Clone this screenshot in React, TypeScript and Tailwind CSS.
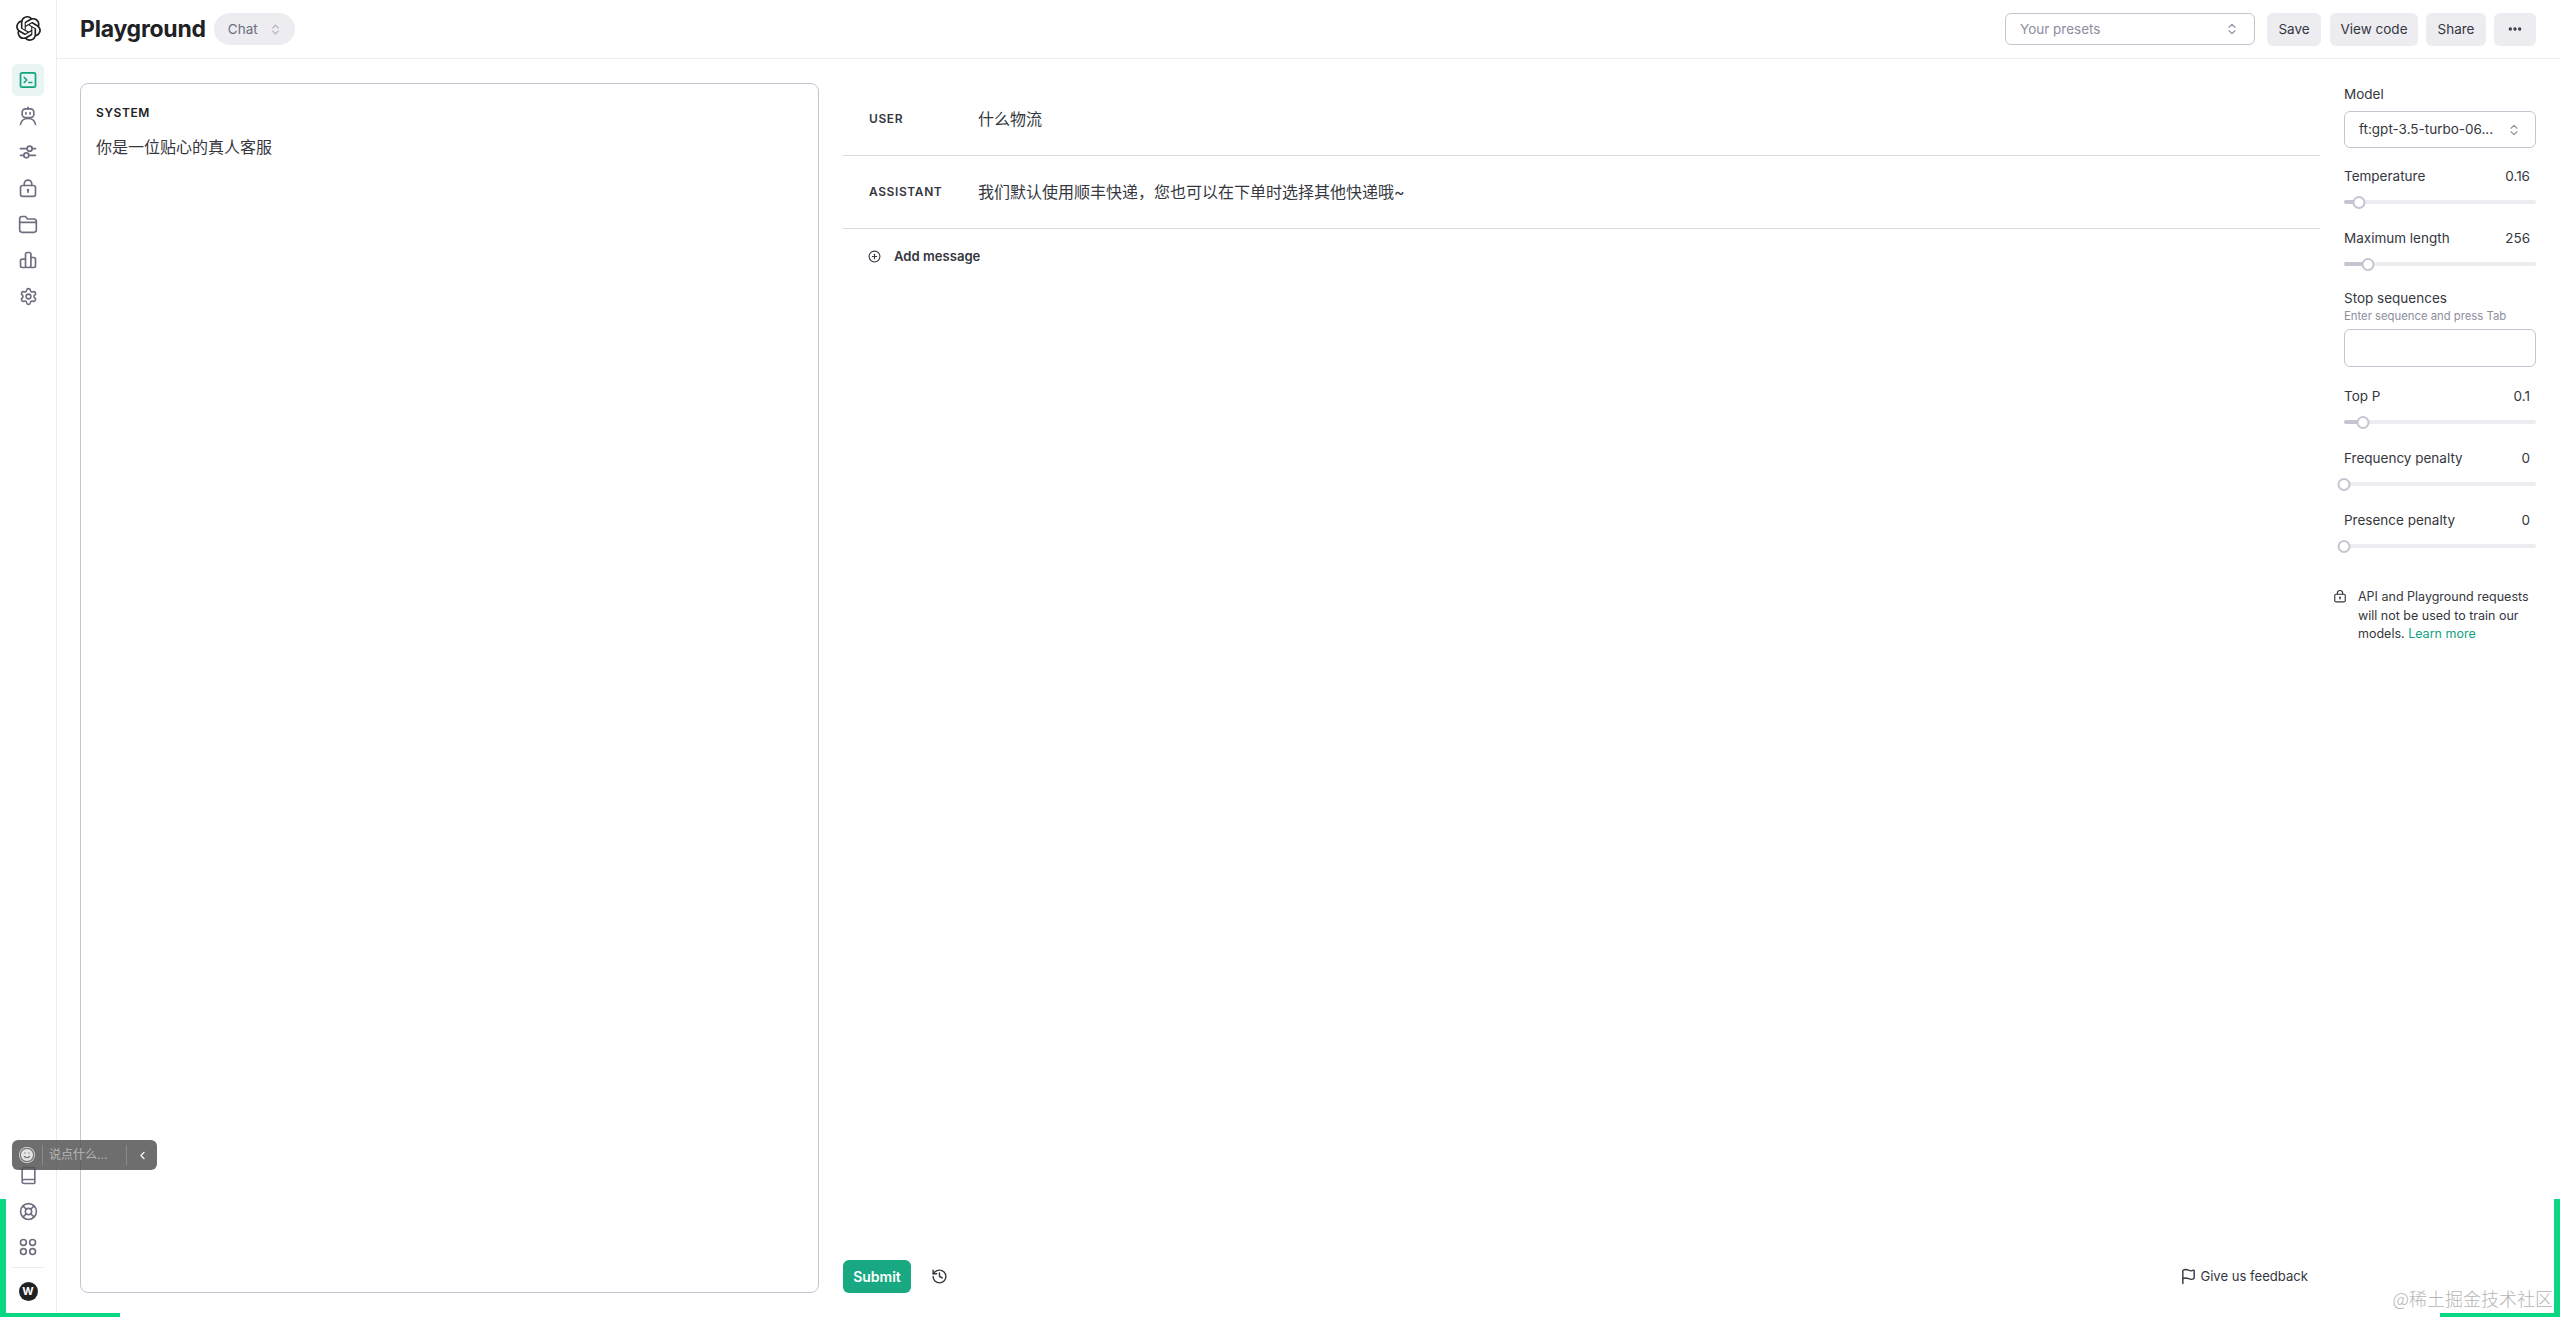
import React from 'react';
import { Book, ChevronLeft, ChevronsUpDown, CirclePlus, Ellipsis, Flag, History, LifeBuoy, Settings as SettingsGear, Smile } from 'lucide-react';
import { SiOpenai } from 'react-icons/si';

const FONT = "font-['Inter','Noto_Sans_CJK_SC',sans-serif]";

const iconProps = {
  width: 18,
  height: 18,
  viewBox: '0 0 24 24',
  fill: 'none',
  stroke: 'currentColor',
  strokeWidth: 2,
  strokeLinecap: 'round' as const,
  strokeLinejoin: 'round' as const,
};

const TerminalIcon = () => (
  <svg {...iconProps} width={20} height={20}>
    <rect x="3" y="3.5" width="18" height="17" rx="2" />
    <path d="M7.5 9l3 3-3 3M13 15h3.5" />
  </svg>
);
const BotIcon = () => (
  <svg {...iconProps} width={20} height={20}>
    <path d="M12 1.500v2" />
    <rect x="5" y="3.500" width="14" height="10.500" rx="4" />
    <path d="M9.500 8v1.500M14.500 8v1.500M3 22c.8-4.500 4-7 9-7s8.200 2.500 9 7" />
  </svg>
);
const TuneIcon = () => (
  <svg {...iconProps} width={20} height={20}>
    <circle cx="14" cy="8" r="3" />
    <circle cx="10" cy="16" r="3" />
    <path d="M3 8h8M17 8h4M3 16h4M13 16h8" />
  </svg>
);
const LockIcon = ({ size = 20 }: { size?: number }) => (
  <svg {...iconProps} width={size} height={size}>
    <rect x="3" y="9" width="18" height="13" rx="2.500" />
    <path d="M7.500 9V7a4.500 4.500 0 0 1 9 0v2M12 14.500v2.500" />
    <circle cx="12" cy="14.500" r="0.600" />
  </svg>
);
const FolderIcon = () => (
  <svg {...iconProps} width={20} height={20}>
    <path d="M2 6a3 3 0 0 1 3-3h4l2.500 3H19a3 3 0 0 1 3 3v10a3 3 0 0 1-3 3H5a3 3 0 0 1-3-3z" />
    <path d="M2 10h20" />
  </svg>
);
const BarsIcon = () => (
  <svg {...iconProps} width={20} height={20}>
    <path d="M9 21H5a2 2 0 0 1-2-2v-6a2 2 0 0 1 2-2h4" />
    <rect x="9" y="3" width="6.500" height="18" rx="2" />
    <path d="M15.500 9H19a2 2 0 0 1 2 2v8a2 2 0 0 1-2 2h-3.500" />
  </svg>
);
const AppsIcon = () => (
  <svg {...iconProps} width={20} height={20}>
    <circle cx="6.500" cy="6.500" r="3.500" />
    <circle cx="17.500" cy="6.500" r="3.500" />
    <circle cx="6.500" cy="17.500" r="3.500" />
    <circle cx="17.500" cy="17.500" r="3.500" />
  </svg>
);

const NavItem = ({ children, active }: { children: React.ReactNode; active?: boolean }) => (
  <div
    className={
      active
        ? 'flex h-8 w-8 items-center justify-center rounded-md bg-[#e9f5f3] text-[#10a37f]'
        : 'flex h-8 w-8 items-center justify-center rounded-md text-[#6e6e80]'
    }
  >
    {children}
  </div>
);

const Sidebar = () => (
  <aside className="flex h-full w-[57px] shrink-0 flex-col items-center border-r border-[#ececf1]">
    <div className="flex h-[56px] shrink-0 items-center justify-center text-[#202123]">
      <SiOpenai size={25} />
    </div>
    <nav className="mt-[8px] flex flex-col gap-1">
      <NavItem active><TerminalIcon /></NavItem>
      <NavItem><BotIcon /></NavItem>
      <NavItem><TuneIcon /></NavItem>
      <NavItem><LockIcon /></NavItem>
      <NavItem><FolderIcon /></NavItem>
      <NavItem><BarsIcon /></NavItem>
      <NavItem><SettingsGear size={19} strokeWidth={2} /></NavItem>
    </nav>
    <div className="mt-auto flex flex-col items-center gap-1 pb-[10px]">
      <NavItem><Book size={19} strokeWidth={2} /></NavItem>
      <NavItem><LifeBuoy size={19} strokeWidth={2} /></NavItem>
      <NavItem><AppsIcon /></NavItem>
      <div className="h-px w-8 bg-[#ececf1]" />
      <div className="mt-[3px] flex h-8 w-8 items-center justify-center">
        <div className="flex h-[19px] w-[19px] items-center justify-center rounded-full bg-[#202123] text-[11px] font-bold text-white">
          W
        </div>
      </div>
    </div>
  </aside>
);

const HeaderButton = ({ children, className }: { children: React.ReactNode; className: string }) => (
  <button className={`flex h-[33px] items-center justify-center rounded-md bg-[#ececf1] text-[13.500px] text-[#353740] ${className}`}>
    {children}
  </button>
);

const Header = () => (
  <header className="flex h-[59px] shrink-0 items-center justify-between border-b border-[#ececf1] pl-[23px] pr-[24px]">
    <div className="flex items-center gap-[8px]">
      <h1 className="text-[23px] font-bold tracking-[-0.01em] text-[#202123]">Playground</h1>
      <div className="flex h-8 w-[81px] items-center rounded-full bg-[#ececf1] pl-[14px] text-[13.500px] text-[#6e6e80]">
        Chat
        <ChevronsUpDown size={13} className="ml-[11px] text-[#acacbe]" />
      </div>
    </div>
    <div className="flex items-center">
      <div className="flex h-8 w-[250px] items-center justify-between rounded-md border border-[#c5c5d2] pl-[14px] pr-[15px] text-[13.500px] text-[#8e8ea0]">
        Your presets
        <ChevronsUpDown size={14} className="text-[#8e8ea0]" />
      </div>
      <HeaderButton className="ml-[12px] w-[54px]">Save</HeaderButton>
      <HeaderButton className="ml-[9px] w-[88px]">View code</HeaderButton>
      <HeaderButton className="ml-[8px] w-[60px]">Share</HeaderButton>
      <HeaderButton className="ml-[8px] w-[42px]"><Ellipsis size={16} strokeWidth={3} /></HeaderButton>
    </div>
  </header>
);

const MessageRow = ({ role, text }: { role: string; text: string }) => (
  <div className="flex h-[73px] shrink-0 items-center border-b border-[#d9d9e3] pl-[26px]">
    <div className="w-[109px] text-[12px] font-semibold tracking-[0.05em] text-[#353740]">{role}</div>
    <div className="text-[16px] text-[#353740]">{text}</div>
  </div>
);

const Slider = ({ percent }: { percent: number }) => (
  <div className="relative mt-[10px] flex h-3 items-center">
    <div className="h-[4px] w-full rounded-full bg-[#ececf1]">
      <div className="h-full rounded-full bg-[#c5c5d2]" style={{ width: `${percent}%` }} />
    </div>
    <div
      className="absolute h-[13px] w-[13px] -translate-x-1/2 rounded-full border-2 border-[#c5c5d2] bg-white"
      style={{ left: `${percent}%` }}
    />
  </div>
);

const Param = ({ label, value, percent, className }: { label: string; value: string; percent: number; className: string }) => (
  <div className={className}>
    <div className="flex h-5 items-center justify-between pr-[6px] text-[13.500px] text-[#353740]">
      <span>{label}</span>
      <span>{value}</span>
    </div>
    <Slider percent={percent} />
  </div>
);

const Settings = () => (
  <section className="flex w-[192px] shrink-0 flex-col pt-[25px]">
    <div className="flex h-5 items-center text-[13.500px] text-[#353740]">Model</div>
    <div className="mt-[7px] flex h-[37px] items-center justify-between rounded-md border border-[#c5c5d2] pl-[14px] pr-[14px] text-[13.500px] text-[#353740]">
      ft:gpt-3.5-turbo-06...
      <ChevronsUpDown size={14} className="text-[#8e8ea0]" />
    </div>
    <Param className="mt-[18px]" label="Temperature" value="0.16" percent={8} />
    <Param className="mt-[20px]" label="Maximum length" value="256" percent={12.5} />
    <div className="mt-[18px] flex h-5 items-center text-[13.500px] text-[#353740]">Stop sequences</div>
    <div className="flex h-4 items-center text-[11.300px] text-[#8e8ea0]">Enter sequence and press Tab</div>
    <div className="mt-[5px] h-[38px] rounded-md border border-[#c5c5d2]" />
    <Param className="mt-[19px]" label="Top P" value="0.1" percent={10} />
    <Param className="mt-[20px]" label="Frequency penalty" value="0" percent={0} />
    <Param className="mt-[20px]" label="Presence penalty" value="0" percent={0} />
    <div className="mt-[36px] -ml-[11px] flex gap-[11px] text-[12.500px] leading-[18.500px] text-[#353740]">
      <div className="mt-px"><LockIcon size={14} /></div>
      <div className="w-[178px]">
        <div>API and Playground requests</div>
        <div>will not be used to train our</div>
        <div>
          <span>models. </span>
          <span className="text-[#10a37f]">Learn more</span>
        </div>
      </div>
    </div>
  </section>
);

export default function App() {
  return (
    <div className={`relative flex h-screen w-full overflow-hidden bg-white ${FONT}`}>
      <Sidebar />
      <main className="flex h-full min-w-0 flex-1 flex-col">
        <Header />
        <div className="flex min-h-0 flex-1 pb-[24px] pl-[23px] pr-[24px]">
          <section className="mt-[24px] w-[739px] shrink-0 rounded-lg border border-[#c5c5d2] pl-[15px] pt-[20px]">
            <div className="text-[12px] font-semibold tracking-[0.05em] text-[#202123]">SYSTEM</div>
            <div className="mt-[13px] text-[16px] text-[#353740]">你是一位贴心的真人客服</div>
          </section>
          <section className="ml-[24px] mr-[24px] mt-[24px] flex min-w-0 flex-1 flex-col">
            <MessageRow role="USER" text="什么物流" />
            <MessageRow role="ASSISTANT" text="我们默认使用顺丰快递，您也可以在下单时选择其他快递哦~" />
            <div className="flex h-[55px] items-center gap-[13px] pl-[25px] text-[13.100px] font-semibold text-[#353740]">
              <CirclePlus size={13} className="-mt-px" />
              Add message
            </div>
            <div className="mt-auto flex items-center justify-between pr-[12px]">
              <div className="flex items-center gap-[20px]">
                <button className="flex h-[33px] w-[68px] items-center justify-center rounded-md bg-[#19a982] text-[14px] font-semibold text-white">
                  Submit
                </button>
                <History size={17} className="text-[#353740]" />
              </div>
              <div className="flex items-center gap-[3px] text-[13.100px] text-[#353740]">
                <Flag size={17} />
                Give us feedback
              </div>
            </div>
          </section>
          <Settings />
        </div>
      </main>

      {/* browser extension widget and capture frame, sit on top of the page */}
      <div className="absolute left-[12px] top-[1140px] flex h-[30px] w-[145px] items-center rounded-md bg-[#555555]/85 pl-[7px]">
        <Smile size={16} className="rounded-full bg-[#e5e5e5] text-[#777777]" />
        <div className="ml-[7px] h-5 w-px bg-[#8a8a8a]" />
        <span className="ml-[6px] w-[77px] text-[12px] text-[#b8b8b8]">说点什么...</span>
        <div className="h-5 w-px bg-[#8a8a8a]" />
        <ChevronLeft size={13} className="ml-[9px] text-white" />
      </div>
      <div className="absolute bottom-0 left-0 h-[118px] w-[6px] bg-[#0bd682]" />
      <div className="absolute bottom-0 left-0 h-[4px] w-[120px] bg-[#0bd682]" />
      <div className="absolute bottom-0 right-0 h-[118px] w-[6px] bg-[#0bd682]" />
      <div className="absolute bottom-0 right-0 h-[4px] w-[120px] bg-[#0bd682]" />
      <div className="absolute bottom-[5px] right-[7px] font-['Noto_Sans_CJK_SC',sans-serif] text-[18px] font-light text-[#b5b5b5]">
        @稀土掘金技术社区
      </div>
    </div>
  );
}
